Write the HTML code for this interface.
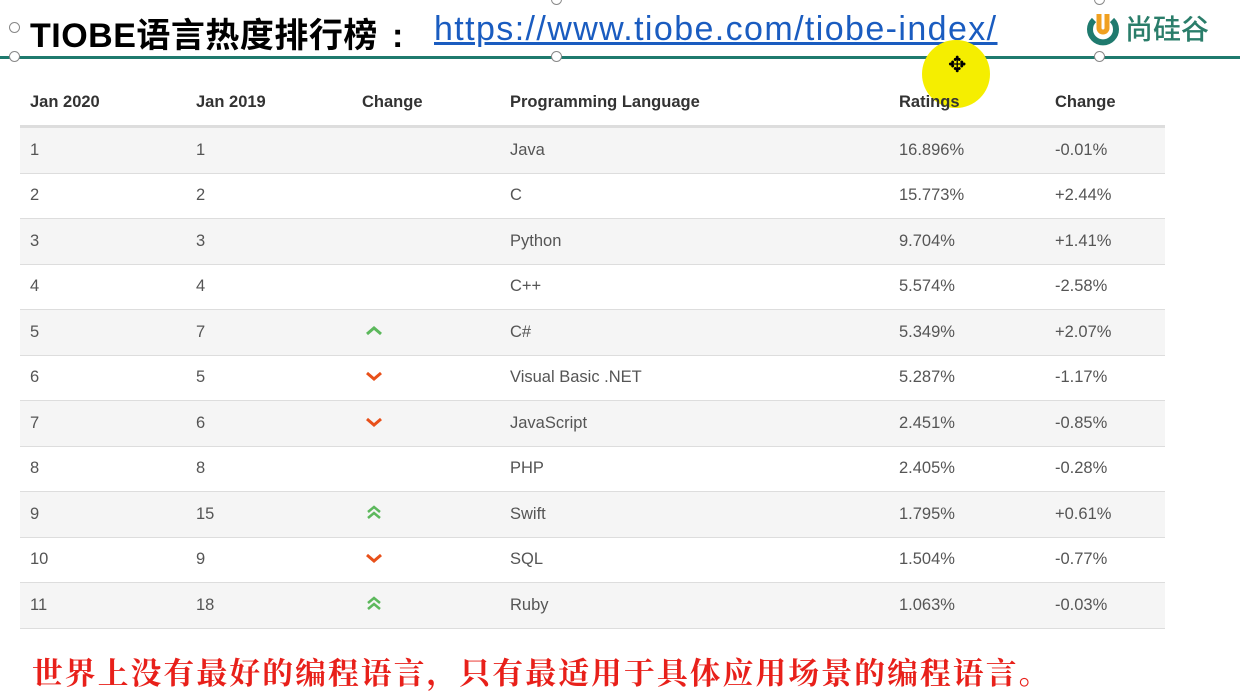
<!DOCTYPE html>
<html><head><meta charset="utf-8"><style>
body{margin:0;width:1240px;height:697px;background:#fff;position:relative;overflow:hidden;font-family:"Liberation Sans",Arial,sans-serif}
.t{position:absolute;left:30px;top:8px;font:bold 34px "Liberation Sans","Noto Sans CJK SC",sans-serif;color:#000;white-space:nowrap;letter-spacing:0.5px}
.l{position:absolute;left:434px;top:10px;font-size:34px;color:#1a5cc0;text-decoration:underline;white-space:nowrap;letter-spacing:1.4px}
.line{position:absolute;left:0;top:56px;width:1240px;height:3px;background:#1f7a6e}
.h{position:absolute;width:9px;height:9px;border:1.5px solid #888;border-radius:50%;background:#fff}
table{position:absolute;left:20px;top:80px;width:1145px;border-collapse:collapse;font-size:16.5px;color:#555}
th{text-align:left;font-weight:bold;color:#333;height:45px;padding:0 0 0 10px;border-bottom:3px solid #ddd}
td{height:44.5px;padding:0 0 0 10px;border-bottom:1px solid #ddd}
tr:nth-child(even) td{background:#f5f5f5}
.r{position:absolute;left:32px;top:649px;font:bold 30.7px "Noto Serif CJK SC","Liberation Serif",serif;color:#e8201a;white-space:nowrap;letter-spacing:2.2px}
.logo{position:absolute;left:1125px;top:8px;font:500 28px "Noto Sans CJK SC",sans-serif;color:#2a7d6a}
</style></head><body>
<div class="t">TIOBE语言热度排行榜<span style="display:inline-block;width:40px;text-align:center">:</span></div>
<div class="l">https://www.tiobe.com/tiobe-index/</div>
<svg style="position:absolute;left:1086px;top:10px" width="36" height="40"><path d="M8 10 A13 13 0 1 0 26 10" fill="none" stroke="#1f7a6e" stroke-width="6"/><path d="M13 4 V18 A4 4 0 0 0 21 18 V4" fill="none" stroke="#f0a020" stroke-width="5"/></svg>
<div class="logo">尚硅谷</div>
<div class="line"></div>
<div class="h" style="left:9px;top:51px"></div><div class="h" style="left:551px;top:51px"></div><div class="h" style="left:1094px;top:51px"></div><div class="h" style="left:9px;top:22px"></div><div class="h" style="left:551px;top:-6px"></div><div class="h" style="left:1094px;top:-6px"></div>
<div style="position:absolute;left:922px;top:40px;width:68px;height:68px;border-radius:50%;background:#f5ee00"></div>
<div style="position:absolute;left:948px;top:52px;font-size:22px;color:#000">✥</div>
<table>
<tr><th style="width:156px">Jan 2020</th><th style="width:156px">Jan 2019</th><th style="width:138px">Change</th><th style="width:379px">Programming Language</th><th style="width:146px">Ratings</th><th>Change</th></tr>
<tr><td>1</td><td>1</td><td></td><td>Java</td><td>16.896%</td><td>-0.01%</td></tr>
<tr><td>2</td><td>2</td><td></td><td>C</td><td>15.773%</td><td>+2.44%</td></tr>
<tr><td>3</td><td>3</td><td></td><td>Python</td><td>9.704%</td><td>+1.41%</td></tr>
<tr><td>4</td><td>4</td><td></td><td>C++</td><td>5.574%</td><td>-2.58%</td></tr>
<tr><td>5</td><td>7</td><td><svg width="20" height="12" style="margin-left:2px"><path d="M3 9 L10 3 L17 9" fill="none" stroke="#5cb85c" stroke-width="3"/></svg></td><td>C#</td><td>5.349%</td><td>+2.07%</td></tr>
<tr><td>6</td><td>5</td><td><svg width="20" height="12" style="margin-left:2px"><path d="M3 3 L10 9 L17 3" fill="none" stroke="#e8501a" stroke-width="3"/></svg></td><td>Visual Basic .NET</td><td>5.287%</td><td>-1.17%</td></tr>
<tr><td>7</td><td>6</td><td><svg width="20" height="12" style="margin-left:2px"><path d="M3 3 L10 9 L17 3" fill="none" stroke="#e8501a" stroke-width="3"/></svg></td><td>JavaScript</td><td>2.451%</td><td>-0.85%</td></tr>
<tr><td>8</td><td>8</td><td></td><td>PHP</td><td>2.405%</td><td>-0.28%</td></tr>
<tr><td>9</td><td>15</td><td><svg width="20" height="16" style="margin-left:2px"><path d="M4 8 L10 3 L16 8 M4 14 L10 9 L16 14" fill="none" stroke="#5cb85c" stroke-width="2.5"/></svg></td><td>Swift</td><td>1.795%</td><td>+0.61%</td></tr>
<tr><td>10</td><td>9</td><td><svg width="20" height="12" style="margin-left:2px"><path d="M3 3 L10 9 L17 3" fill="none" stroke="#e8501a" stroke-width="3"/></svg></td><td>SQL</td><td>1.504%</td><td>-0.77%</td></tr>
<tr><td>11</td><td>18</td><td><svg width="20" height="16" style="margin-left:2px"><path d="M4 8 L10 3 L16 8 M4 14 L10 9 L16 14" fill="none" stroke="#5cb85c" stroke-width="2.5"/></svg></td><td>Ruby</td><td>1.063%</td><td>-0.03%</td></tr>
</table>
<div class="r">世界上没有最好的编程语言，只有最适用于具体应用场景的编程语言。</div>
</body></html>
